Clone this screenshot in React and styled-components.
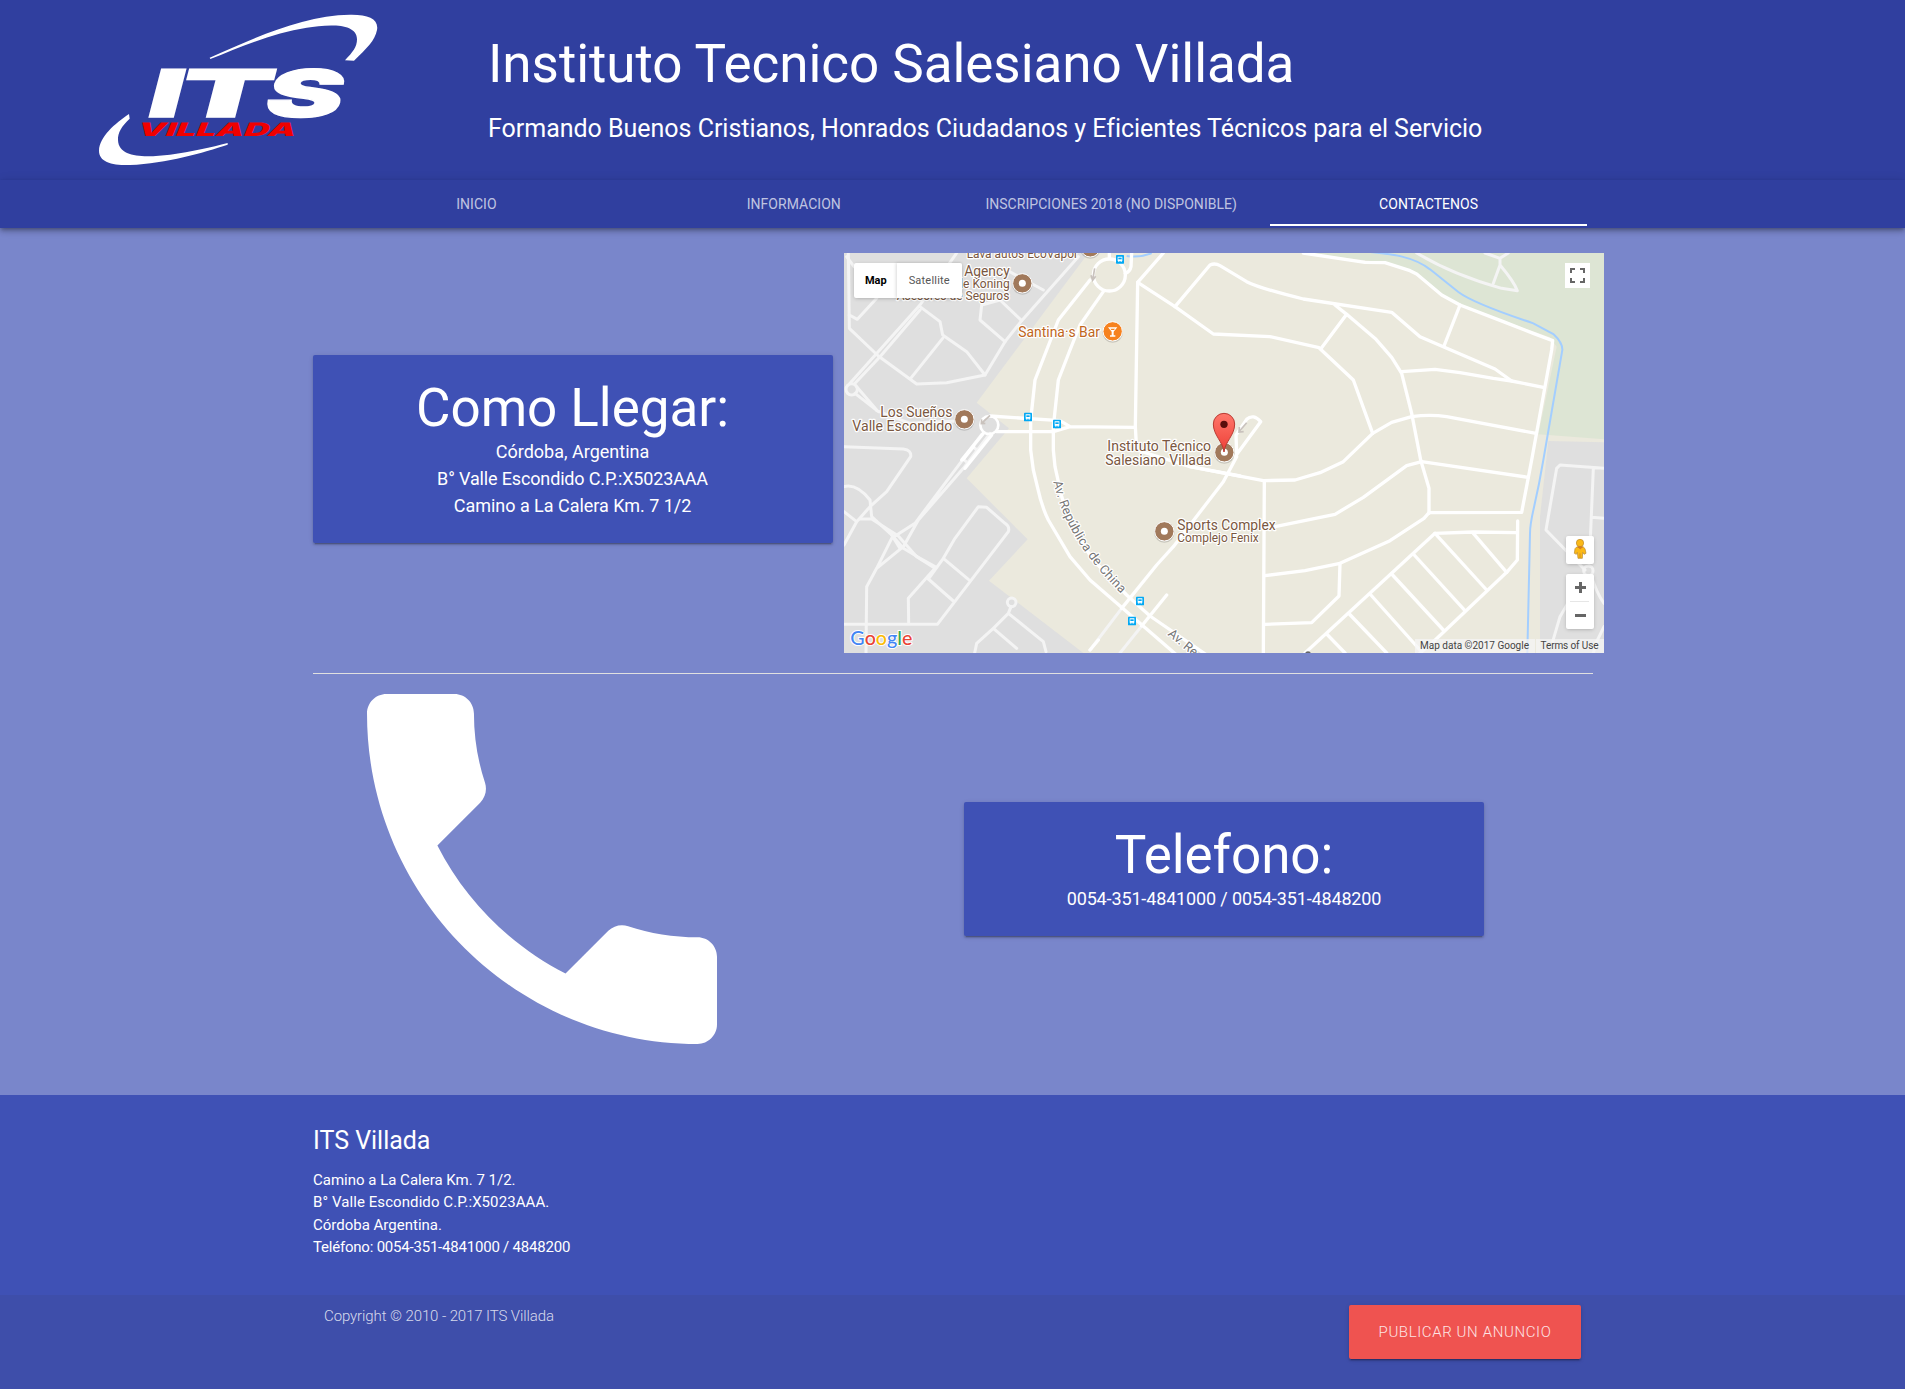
import React from 'react';
import styled, { createGlobalStyle } from 'styled-components';

const GlobalStyle = createGlobalStyle`
  * { box-sizing: border-box; }
  html { font-size: 15px; }
  body {
    margin: 0;
    background: #7986cb;
    color: #fff;
    font-family: Roboto, "Liberation Sans", sans-serif;
    line-height: 1.5;
  }
  h2, h5, p { margin: 0; font-weight: 400; }
`;

const shadow = '0 2px 2px 0 rgba(0,0,0,.14), 0 1px 5px 0 rgba(0,0,0,.12), 0 3px 1px -2px rgba(0,0,0,.2)';

const Header = styled.header`
  display: flex;
  height: 180px;
  background: #303f9f;
`;
const LogoBox = styled.div`
  flex: 0 0 488px;
  padding-left: 80px;
`;
const LogoSvg = styled.svg`
  display: block;
`;
const Titles = styled.div`
  padding-top: 34.6px;
`;
const Heading = styled.h2`
  font-size: 53px;
  line-height: 58.7px;
  letter-spacing: -.05px;
`;
const SubHeading = styled.h5`
  font-size: 25px;
  line-height: 27px;
  letter-spacing: -.02px;
  margin-top: ${(p) => p.$top || 0}px;
`;

const Nav = styled.nav`
  position: relative;
  display: flex;
  justify-content: center;
  height: 48px;
  background: #303f9f;
  box-shadow: 0 4px 5px 0 rgba(0,0,0,.14), 0 1px 10px 0 rgba(0,0,0,.12), 0 2px 4px -1px rgba(0,0,0,.3);
`;
const Tab = styled.a`
  flex: 0 0 317.4px;
  height: 46px;
  line-height: 48px;
  text-align: center;
  font-size: 14px;
  letter-spacing: .04px;
  text-transform: uppercase;
  color: ${(p) => (p.$active ? '#fff' : 'rgba(255,255,255,.7)')};
  border-bottom: ${(p) => (p.$active ? '2px solid #fff' : '0')};
`;

const Main = styled.main`
  width: 1280px;
  height: 867px;
  margin: 0 auto;
  padding-top: 25px;
`;
const Row = styled.section`
  display: flex;
  align-items: center;
`;
const Divider = styled.div`
  height: 1px;
  margin: 20px 0;
  background: #e0e0e0;
`;
const Card = styled.div`
  flex: 0 0 520px;
  padding: 24px;
  border-radius: 2px;
  background: #3f51b5;
  text-align: center;
  box-shadow: ${shadow};
  margin-right: ${(p) => p.$gap || 0}px;
  margin-bottom: ${(p) => p.$lift || 0}px;
`;
const CardLine = styled.p`
  font-size: 18px;
  line-height: 27px;
  letter-spacing: ${(p) => p.$track || 0}px;
`;
const PhoneBox = styled.div`
  flex: 0 0 651.5px;
  padding-left: 54.5px;
`;
const PhoneSvg = styled.svg`
  display: block;
`;

const MapFrame = styled.div`
  position: relative;
  flex: 0 0 760px;
  height: 400px;
  overflow: hidden;
`;
const MapSvg = styled.svg`
  display: block;
`;
const MapType = styled.div`
  position: absolute;
  left: 10px;
  top: 10px;
  display: flex;
  height: 35px;
  border-radius: 2px;
  background: #fff;
  box-shadow: 0 1px 4px -1px rgba(0,0,0,.3);
`;
const MapTypeButton = styled.div`
  width: ${(p) => p.$w}px;
  line-height: 35px;
  text-align: center;
  font-size: 11px;
  letter-spacing: ${(p) => (p.$on ? 0 : 0.2)}px;
  padding-left: ${(p) => (p.$on ? 1 : 0)}px;
  font-weight: ${(p) => (p.$on ? 700 : 400)};
  color: ${(p) => (p.$on ? '#000' : '#565656')};
  box-shadow: ${(p) => (p.$on ? 'none' : '-1px 0 3px rgba(0,0,0,.15)')};
`;
const Control = styled.div`
  position: absolute;
  left: ${(p) => p.$x}px;
  top: ${(p) => p.$y}px;
  width: ${(p) => p.$w}px;
  height: ${(p) => p.$h}px;
  border-radius: ${(p) => (p.$flat ? 0 : 2)}px;
  background: #fff;
  box-shadow: ${(p) => (p.$flat ? 'none' : '0 1px 4px -1px rgba(0,0,0,.3)')};
  svg { display: block; }
`;
const Credits = styled.div`
  position: absolute;
  right: 0;
  bottom: 0;
  display: flex;
  gap: 1px;
  height: 14px;
  line-height: 14px;
  font-size: 10px;
  color: #444;
  white-space: nowrap;
`;
const Credit = styled.span`
  width: ${(p) => p.$w}px;
  letter-spacing: ${(p) => p.$track || 0}px;
  text-align: center;
  background: rgba(245,245,245,.72);
`;

const Footer = styled.footer`
  height: 294px;
  background: #3f51b5;
`;
const FooterTop = styled.div`
  width: 1279px;
  height: 200px;
  margin: 0 auto;
  padding-top: 20px;
`;
const FooterText = styled.div`
  margin-top: 14.3px;
`;
const FooterLine = styled.p`
  font-size: 15px;
  line-height: 22.5px;
  letter-spacing: ${(p) => p.$track || 0}px;
`;
const FooterBottom = styled.div`
  height: 94px;
  padding: 10px 0;
  background: rgba(51,51,51,.08);
`;
const FooterInner = styled.div`
  display: flex;
  justify-content: space-between;
  align-items: flex-start;
  width: 1257px;
  margin: 0 auto;
  font-size: 15px;
  font-weight: 300;
  color: rgba(255,255,255,.8);
`;
const Copyright = styled.span`
  letter-spacing: -.1px;
`;
const Publish = styled.a`
  width: 232px;
  height: 54px;
  line-height: 54px;
  border-radius: 2px;
  background: #ef5350;
  text-align: center;
  text-transform: uppercase;
  letter-spacing: .62px;
  color: #fde4e4;
  box-shadow: ${shadow};
`;

function Logo() {
  return (
    <LogoSvg width="320" height="180" viewBox="0 0 960 540" fill="#fff">
      <path d="M389 173C520 115 670 45 810 44C865 43 897 57 891 90C885 122 860 145 822 182L795 181C818 157 831 141 831 118C831 65 735 75 680 83C580 98 480 142 391 177Z" />
      <path d="M147 342L149 356C125 378 113 398 114 420C116 478 205 471 270 464C335 456 395 441 443 429L443 434C370 458 260 490 150 495C95 496 57 486 57 452C58 411 105 370 147 342Z" />
      <g
        transform="matrix(1 0 -.26 1 0 350)"
        fontFamily="Inter, sans-serif"
        fontWeight="900"
        fontSize="197"
        stroke="#fff"
        strokeWidth="4"
      >
        <text x="193" textLength="102" lengthAdjust="spacingAndGlyphs">I</text>
        <text x="283" textLength="278" lengthAdjust="spacingAndGlyphs">T</text>
        <text x="544" textLength="232" lengthAdjust="spacingAndGlyphs">S</text>
      </g>
      <text
        transform="matrix(1 0 -.4 1 168 407)"
        fill="#f00000"
        fontFamily="Inter, sans-serif"
        fontWeight="900"
        fontSize="56"
        textLength="474"
        lengthAdjust="spacingAndGlyphs"
      >VILLADA</text>
    </LogoSvg>
  );
}

const Poi = ({ x, y, color = '#a1795b', children }) => (
  <g transform={`translate(${x} ${y})`}>
    <circle cy="3" r="31" fill="#000" opacity=".15" />
    <circle r="29" fill={color} stroke="#fff" strokeWidth="3" />
    {children || <circle r="10.5" fill="#fff" />}
  </g>
);

const BusStop = ({ x, y }) => (
  <g transform={`translate(${x} ${y})`}>
    <rect x="-12" y="-13" width="24" height="26" rx="2" fill="#03a9f4" />
    <path d="M-7 -8H7V5H5V8H2V5H-2V8H-5V5H-7Z" fill="#fff" />
    <path d="M-5 -5H5V0H-5Z" fill="#03a9f4" />
  </g>
);

const labels = [
  ['Lava autos EcoVapor', 380, 24, 334, 37],
  ['Agency', 373, 79, 136, 42],
  ['de Koning', 349, 115, 160, 37],
  ['Asesores de Seguros', 170, 150, 338, 37],
  ['Los Sueños', 121, 502, 216, 43],
  ['Valle Escondido', 37, 543, 300, 43],
  ['Instituto Técnico', 802, 603, 311, 43],
  ['Salesiano Villada', 796, 645, 318, 43],
  ['Sports Complex', 1012, 840, 295, 43],
  ['Complejo Fenix', 1012, 876, 244, 37],
];

function MapCanvas() {
  return (
    <MapSvg width="760" height="400" viewBox="12 9 2280 1200">
      <rect x="12" y="9" width="2280" height="1200" fill="#ebe9dd" />
      <path fill="#dfdfdf" d="M12 9H745L410 458L507 535L380 685L563 868L447 992L730 1209H12Z" />
      <path fill="#dde5d4" d="M1390 9L1640 38L1720 62L1800 130L1860 165L2130 262L2150 290L2095 553L2292 568V9Z" />
      <path fill="#dfdfdf" d="M2125 573L2292 577V1209H2100V800Z" />

      <g fill="none" stroke="#f4f4f4" strokeWidth="9" strokeLinejoin="round" strokeLinecap="round">
        <path d="M25 9L28 235L115 318L230 402L320 398L435 375L495 275L545 212L715 20" />
        <path d="M350 9L240 165L30 400M240 180L120 320L45 400M20 20L42 50M28 195L52 208L110 145M240 170L300 215L308 255L380 305L435 375M308 265L212 385M495 275L420 210L425 165L480 150L545 212M500 60L610 120" />
        <circle cx="35" cy="418" r="17" />
        <path d="M50 410L110 480M45 430L115 485M110 482L210 520L350 513" />
        <path d="M12 590L190 597Q215 600 212 620L140 725L90 770L50 815L12 885M12 710Q50 700 90 750L95 800L155 855L190 895L240 925L285 950" />
        <path d="M12 785L50 815M60 807H95L175 858L230 920L285 955M425 553L360 640L225 820L155 865L110 955L80 1010L78 1209M450 550L370 655L235 810L190 890L110 955M400 590L415 605M370 628L385 640M155 855L180 895M285 955L205 1045L206 1120" />
        <path d="M12 1123H292L505 845Q510 830 495 820L440 772L415 770L345 865L310 925L385 988M310 925L265 987L340 1053" />
        <circle cx="515" cy="1057" r="13" />
        <path d="M513 1070L505 1090L460 1135L410 1180L404 1209M505 1090L610 1175L618 1205M460 1135L530 1195" />
        <g transform="translate(1140 600)">
          <path d="M1152 55L1020 45L1010 55L978 240L1095 360M1120 55L1108 340M1115 202L1152 205M1115 380Q1130 430 1152 460M1090 380L1020 500L998 575M1152 530L1130 575L1120 609" />
          <circle cx="1105" cy="362" r="14" />
        </g>
        <path d="M1730 9Q1840 75 1985 115L2032 122Q2022 95 1980 45L1960 100M1935 9L1980 25L2005 9M1980 25V45" />
        <path d="M845 1075L750 1200M905 1128L840 1209" />
      </g>

      <path fill="none" stroke="#a3ceff" strokeWidth="6" d="M1580 5C1660 12 1720 20 1770 58L1855 126Q1900 160 2080 220L2140 252Q2168 278 2167 300L2110 630C2085 780 2070 800 2070 850L2062 1209M860 18Q900 24 935 9" />

      <g fill="none" stroke="#fff" strokeWidth="10" strokeLinejoin="round" strokeLinecap="round">
        <circle cx="808" cy="75" r="48" />
        <path d="M808 9V25M875 9L873 50Q870 65 856 70" />
        <path d="M750 90L655 210L620 300L585 390L572 510V600L580 660L592 710Q605 770 625 810L690 920L750 990L1010 1215" />
        <path d="M790 125L720 225L690 300L655 390L640 530V600L645 650L665 740L700 840L760 930L860 1035L930 1098L1100 1215" />
        <path d="M970 9L893 97L886 530L890 600L1050 650L1270 692L1365 690L1440 668L1510 635L1598 550" />
        <path d="M893 97L1005 170L1120 252L1290 260L1437 293L1540 390L1598 550" />
        <path d="M1005 170L1110 45Q1125 38 1140 47L1220 95Q1260 115 1390 147L1655 187L1740 260L1965 357L2015 393" />
        <circle cx="448" cy="525" r="27" strokeWidth="8" />
        <path d="M450 498L660 512L690 530L886 532M470 545H640L690 530" />
        <path d="M400 590L370 628M430 550L365 630M455 555L375 655" />
        <path d="M1050 650L1200 678M1190 620L1150 695L1000 890L950 945L845 1075M980 1035L905 1128M775 1170L750 1200" />
        <g transform="translate(1140 0)">
          <path d="M250 9L435 37L495 38L570 62L590 72L665 135L720 165L850 215L940 250L998 272L995 300L935 630L905 787L627 788L612 805L510 872L360 940L255 962L135 977" />
          <path d="M720 165L672 288M345 165L380 193L468 268L515 322L545 370L575 490L602 630L627 715V790" />
          <path d="M380 193L302 297M545 365L645 358L720 368L820 385L875 393L970 412" />
          <path d="M458 550L515 517L575 500Q630 492 680 500L948 550M50 610L48 555L80 508Q100 490 122 515L45 620" />
        </g>
        <g transform="translate(1140 600)">
          <path d="M133 92L130 609M165 230L345 193L430 142L560 47L605 35L925 82M360 340L357 438L275 518L135 523" />
          <path d="M893 213L892 330L860 367L640 575L600 609M890 248L760 246L645 250L255 609" />
          <path d="M645 250L800 420M760 250L860 367M580 312L735 482M515 372L670 540M450 432L600 600M388 492L500 609M320 552L375 609" />
        </g>
      </g>

      <g fill="none" stroke="#c9c2bd" strokeWidth="5">
        <path d="M764 55L758 90M753 76L758 91L767 79M450 496L425 520M425 508L424 521L436 520M1220 518L1197 545M1198 531L1197 546L1211 545" />
      </g>

      <g fontFamily="Roboto, sans-serif" fill="#7a5741" stroke="#fff" strokeWidth="7" strokeLinejoin="round" paintOrder="stroke">
        {labels.map(([text, x, y, length, size]) => (
          <text key={text} x={x} y={y} textLength={length} lengthAdjust="spacingAndGlyphs" fontSize={size}>{text}</text>
        ))}
        <text x="535" y="262" textLength="245" lengthAdjust="spacingAndGlyphs" fontSize="43" fill="#c0661b">Santina·s Bar</text>
        <path id="avenue" d="M640 695C665 800 710 900 860 1048" fill="none" stroke="none" />
        <text fontSize="38" fill="#757575" textLength="398"><textPath href="#avenue">Av. República de China</textPath></text>
        <text fontSize="38" fill="#757575" transform="translate(982 1154) rotate(40)">Av. Re</text>
      </g>

      <Poi x={547} y={100} />
      <Poi x={751} y={-8} />
      <Poi x={373} y={508} />
      <Poi x={1153} y={607} />
      <Poi x={973} y={844} />
      <Poi x={818} y={244} color="#f6821f">
        <path d="M-14 -12H14L3 1V12H8V16H-8V12H-3V1Z" fill="#fff" />
        <path d="M-7 -8H7L4 -4H-4Z" fill="#f6821f" />
      </Poi>
      <circle cx="1404" cy="1213" r="9" fill="#666" />
      <BusStop x={840} y={28} />
      <BusStop x={564} y={501} />
      <BusStop x={651} y={522} />
      <BusStop x={900} y={1053} />
      <BusStop x={876} y={1113} />

      <defs>
        <linearGradient id="pin" x1="0" y1="0" x2="0" y2="1">
          <stop offset="0" stopColor="#ff776b" />
          <stop offset="1" stopColor="#ee3f36" />
        </linearGradient>
      </defs>
      <path d="M1152 606C1149 575 1120 556 1120 522A32 32 0 0 1 1184 522C1184 556 1155 575 1152 606Z" fill="url(#pin)" stroke="#b93a32" strokeWidth="3" />
      <circle cx="1152" cy="523" r="11" fill="#590e0c" />

      <text x="31" y="1184" fontFamily="Lato, sans-serif" fontWeight="500" fontSize="60" textLength="186" stroke="#fff" strokeWidth="6" paintOrder="stroke" lengthAdjust="spacingAndGlyphs">
        <tspan fill="#4285f4">G</tspan><tspan fill="#ea4335">o</tspan><tspan fill="#fbbc05">o</tspan><tspan fill="#4285f4">g</tspan><tspan fill="#34a853">l</tspan><tspan fill="#ea4335">e</tspan>
      </text>
    </MapSvg>
  );
}

function LocationMap() {
  return (
    <MapFrame>
      <MapCanvas />
      <MapType>
        <MapTypeButton $w={43.5} $on>Map</MapTypeButton>
        <MapTypeButton $w={64.5}>Satellite</MapTypeButton>
      </MapType>
      <Control $x={721} $y={10} $w={25} $h={25} $flat>
        <svg width="25" height="25" fill="none" stroke="#666" strokeWidth="2">
          <path d="M6 10V6H10M15 6H19V10M19 15V19H15M10 19H6V15" />
        </svg>
      </Control>
      <Control $x={722} $y={283} $w={28} $h={28}>
        <svg width="28" height="28" viewBox="0 0 84 84">
          <path d="M32 33L27 38L25 52L31 55L34 49L36 67H49L50 49L54 55L60 52L57 38L52 33Z" fill="#fbb917" stroke="#b8862b" strokeWidth="2" />
          <circle cx="42" cy="21" r="11" fill="#fbb917" stroke="#b8862b" strokeWidth="2" />
          <path d="M35 32H50L43 39ZM42 52V66" fill="#e37722" stroke="#c77d1c" strokeWidth="2" />
        </svg>
      </Control>
      <Control $x={722} $y={321} $w={28} $h={55}>
        <svg width="28" height="55">
          <path d="M9 13.5H20M14.5 8V19M9 41.5H20" stroke="#666" strokeWidth="3" />
          <path d="M4 27.5H23" stroke="#e6e6e6" />
        </svg>
      </Control>
      <Credits>
        <Credit $w={120}>Map data ©2017 Google</Credit>
        <Credit $w={68} $track={-0.12}>Terms of Use</Credit>
      </Credits>
    </MapFrame>
  );
}

const tabs = ['Inicio', 'Informacion', 'Inscripciones 2018 (No disponible)', 'Contactenos'];

export default function App() {
  return (
    <>
      <GlobalStyle />
      <Header>
        <LogoBox><Logo /></LogoBox>
        <Titles>
          <Heading>Instituto Tecnico Salesiano Villada</Heading>
          <SubHeading $top={21.4}>Formando Buenos Cristianos, Honrados Ciudadanos y Eficientes Técnicos para el Servicio</SubHeading>
        </Titles>
      </Header>
      <Nav>
        {tabs.map((tab, i) => <Tab key={tab} $active={i === 3}>{tab}</Tab>)}
      </Nav>
      <Main>
        <Row>
          <Card $gap={11} $lift={8}>
            <Heading>Como Llegar:</Heading>
            <CardLine>Córdoba, Argentina</CardLine>
            <CardLine $track={-0.15}>B° Valle Escondido C.P.:X5023AAA</CardLine>
            <CardLine $track={-0.03}>Camino a La Calera Km. 7 1/2</CardLine>
          </Card>
          <LocationMap />
        </Row>
        <Divider />
        <Row>
          <PhoneBox>
            <PhoneSvg width="350" height="350" viewBox="3 3 18 18" fill="#fff">
              <path d="M6.62 10.79c1.44 2.83 3.76 5.14 6.59 6.59l2.2-2.2c.27-.27.67-.36 1.02-.24 1.12.37 2.33.57 3.57.57.55 0 1 .45 1 1V20c0 .55-.45 1-1 1-9.39 0-17-7.61-17-17 0-.55.45-1 1-1h3.5c.55 0 1 .45 1 1 0 1.25.2 2.45.57 3.57.11.35.03.74-.25 1.02l-2.2 2.2z" />
            </PhoneSvg>
          </PhoneBox>
          <Card>
            <Heading>Telefono:</Heading>
            <CardLine $track={-0.14}>0054-351-4841000 / 0054-351-4848200</CardLine>
          </Card>
        </Row>
      </Main>
      <Footer>
        <FooterTop>
          <SubHeading $top={12.3}>ITS Villada</SubHeading>
          <FooterText>
            <FooterLine>Camino a La Calera Km. 7 1/2.</FooterLine>
            <FooterLine $track={0.08}>B° Valle Escondido C.P.:X5023AAA.</FooterLine>
            <FooterLine>Córdoba Argentina.</FooterLine>
            <FooterLine $track={-0.21}>Teléfono: 0054-351-4841000 / 4848200</FooterLine>
          </FooterText>
        </FooterTop>
        <FooterBottom>
          <FooterInner>
            <Copyright>Copyright © 2010 - 2017 ITS Villada</Copyright>
            <Publish>Publicar un anuncio</Publish>
          </FooterInner>
        </FooterBottom>
      </Footer>
    </>
  );
}
